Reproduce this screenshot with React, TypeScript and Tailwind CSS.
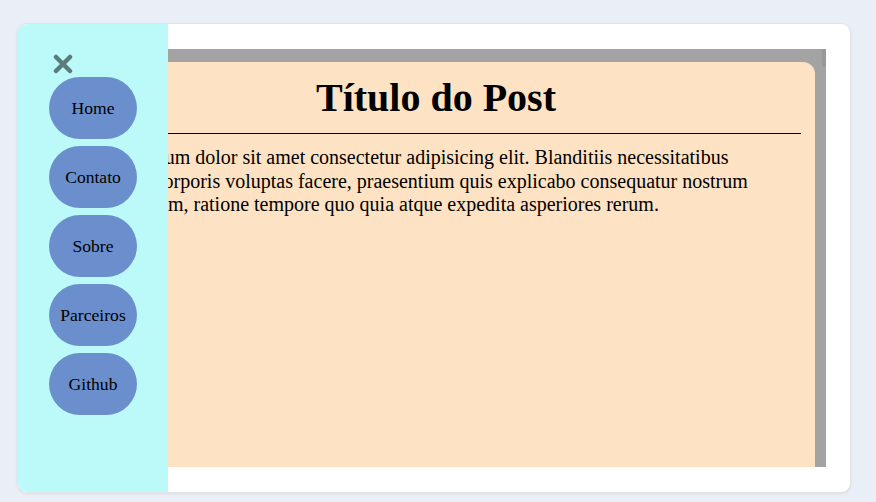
import { useState } from "react";

const links = ["Home", "Contato", "Sobre", "Parceiros", "Github"];

export default function App() {
  const [open, setOpen] = useState(true);

  return (
    <main
      className="min-h-[502px] bg-[#eaeef7] px-[17px] pt-[23px] pb-[9px] pr-[25px]"
      style={{ fontFamily: '"Liberation Serif", "Times New Roman", serif' }}
    >
      <div className="relative h-[470px] overflow-hidden rounded-[10px] border border-[#e4e4e4] bg-white shadow-[0_1px_3px_rgba(0,0,0,0.08)]">
        {/* POST AREA */}
        <div className="ml-[24px] mr-[24px] mt-[25px] flex h-[418px] bg-[#a3a3a3] pl-[15px] pt-[13px]">
          <article className="flex-1 rounded-tr-[12px] bg-[#fde3c3] px-[14px] text-black">
            <h1 className="pt-[12px] pb-[11px] text-center text-[40px] font-bold leading-[48px]">
              Título do Post
            </h1>
            <hr className="border-t border-black" />
            <p className="mt-[12px] pl-[12px] text-[20px] leading-[23.5px]">
              Lorem ipsum dolor sit amet consectetur adipisicing elit. Blanditiis necessitatibus
              <br />
              dolorem corporis voluptas facere, praesentium quis explicabo consequatur nostrum
              <br />
              totam earum, ratione tempore quo quia atque expedita asperiores rerum.
            </p>
          </article>
          <div className="w-[11px] flex flex-col items-end">
            <div className="-mt-[13px] h-[18px] w-[4px] bg-[#999999]" />
          </div>
        </div>

        {/* SIDEBAR */}
        {open && (
          <nav className="absolute inset-y-0 left-0 w-[150px] bg-[#bcfafa] pl-[31px] pt-[30px]">
            <button onClick={() => setOpen(false)} className="ml-[4px] block">
              <svg width="20" height="20" viewBox="0 0 20 20">
                <path
                  d="M3 3 L17 17 M17 3 L3 17"
                  stroke="#5b7d7a"
                  strokeWidth="4.5"
                  strokeLinecap="round"
                />
              </svg>
            </button>
            <ul className="mt-[3px] flex flex-col gap-[7px]">
              {links.map((l) => (
                <li key={l}>
                  <a className="flex h-[62px] w-[88px] items-center justify-center rounded-[31px] bg-[#6b8fcc] text-[17.6px] text-black">
                    {l}
                  </a>
                </li>
              ))}
            </ul>
          </nav>
        )}
      </div>
    </main>
  );
}
